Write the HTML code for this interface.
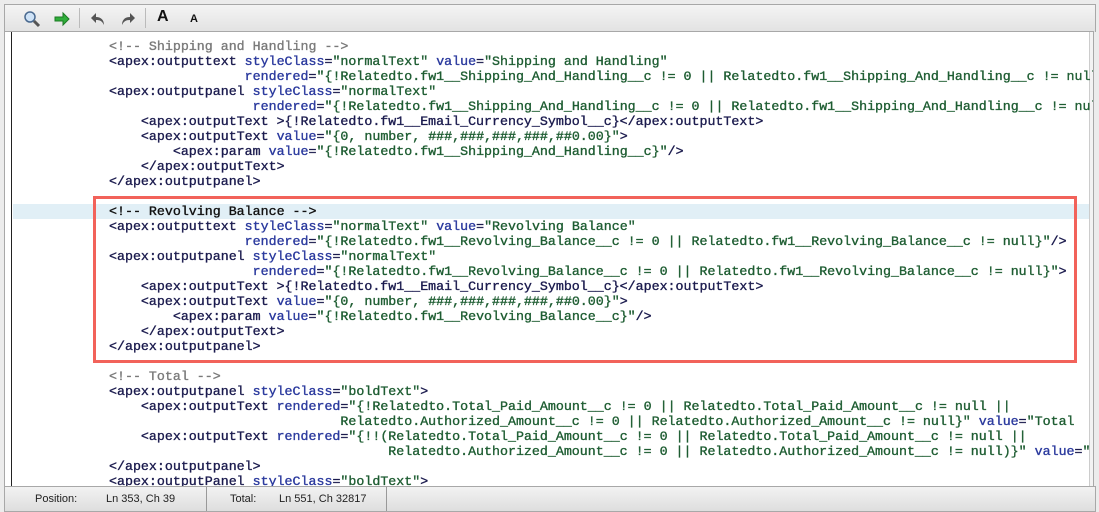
<!DOCTYPE html>
<html><head><meta charset="utf-8"><style>
body{margin:0;width:1099px;height:512px;background:#ececec;position:relative;overflow:hidden;font-family:"Liberation Sans",sans-serif}
#tb{position:absolute;left:4px;top:4px;width:1090px;height:27px;background:linear-gradient(#f4f4f4,#e2e2e2);border:1px solid #a8a8a8;border-bottom:none}
#ed{position:absolute;left:4px;top:31px;width:1088px;height:455px;background:#fff;border:1px solid #a8a8a8;overflow:hidden}
#gut{position:absolute;left:6px;top:0;width:1px;height:455px;background:#222}
#sb{position:absolute;left:1084px;top:0;width:6px;height:455px;background:#f3f3f3;border-left:1px solid #ccc}
#hl{position:absolute;left:8px;top:172px;width:1076px;height:15px;background:#e1eff6}
pre{margin:0;position:absolute;left:104px;top:7px;font:13.3px/15px "Liberation Mono",monospace;-webkit-text-stroke:0.35px;color:#1b1b4e;white-space:pre}
.a{color:#2b3a9e}.v{color:#1e5d32}.c{color:#7a7a7a}.k{color:#111}
#box{position:absolute;left:93px;top:196px;width:978px;height:161px;border:3px solid #f2625a}
#st{position:absolute;left:4px;top:486px;width:1090px;height:24px;background:linear-gradient(#f2f2f2,#dedede);border:1px solid #a8a8a8;font-size:11px;color:#222}
#st span{position:absolute;top:6px}
.sep{position:absolute;top:0;width:1px;height:24px;background:#999}
.ic{position:absolute;top:8px}
</style></head><body>
<div id="tb">
<svg class="ic" style="left:18px;top:5px" width="18" height="18"><circle cx="7" cy="7" r="5" fill="#cfe3f7" stroke="#4a6a90" stroke-width="1.5"/><line x1="11" y1="11" x2="16" y2="16" stroke="#555" stroke-width="3"/></svg>
<svg class="ic" style="left:48px;top:5px" width="18" height="18"><path d="M2 7h8V3l6 6-6 6v-4H2z" fill="#2fae3a" stroke="#1c7a24"/></svg>
<div class="sep" style="left:74px;top:3px;height:20px;background:#bbb"></div>
<svg class="ic" style="left:84px;top:5px" width="18" height="18"><path d="M7 3L2 8l5 5V10c4 0 6 1 8 5 0-5-3-8-8-8z" fill="#555"/></svg>
<svg class="ic" style="left:114px;top:5px" width="18" height="18"><path d="M11 3l5 5-5 5V10c-4 0-6 1-8 5 0-5 3-8 8-8z" fill="#555"/></svg>
<div class="sep" style="left:140px;top:3px;height:20px;background:#bbb"></div>
<span style="position:absolute;left:152px;top:3px;font:bold 16px 'Liberation Sans';color:#111">A</span>
<span style="position:absolute;left:185px;top:8px;font:bold 11px 'Liberation Sans';color:#111">A</span>
</div>
<div id="ed"><div id="gut"></div><div id="hl"></div><div id="sb"></div>
<pre><span class="c">&lt;!-- Shipping and Handling --&gt;</span>
&lt;apex:outputtext <span class="a">styleClass</span>=<span class="v">"normalText"</span> <span class="a">value</span>=<span class="v">"Shipping and Handling"</span>
                 <span class="a">rendered</span>=<span class="v">"{!Relatedto.fw1__Shipping_And_Handling__c != 0 || Relatedto.fw1__Shipping_And_Handling__c != null}"/&gt;</span>
&lt;apex:outputpanel <span class="a">styleClass</span>=<span class="v">"normalText"</span>
                  <span class="a">rendered</span>=<span class="v">"{!Relatedto.fw1__Shipping_And_Handling__c != 0 || Relatedto.fw1__Shipping_And_Handling__c != null}"</span>&gt;
    &lt;apex:outputText &gt;{!Relatedto.fw1__Email_Currency_Symbol__c}&lt;/apex:outputText&gt;
    &lt;apex:outputText <span class="a">value</span>=<span class="v">"{0, number, ###,###,###,###,##0.00}"</span>&gt;
        &lt;apex:param <span class="a">value</span>=<span class="v">"{!Relatedto.fw1__Shipping_And_Handling__c}"</span>/&gt;
    &lt;/apex:outputText&gt;
&lt;/apex:outputpanel&gt;

<span class="k">&lt;!-- Revolving Balance --&gt;</span>
&lt;apex:outputtext <span class="a">styleClass</span>=<span class="v">"normalText"</span> <span class="a">value</span>=<span class="v">"Revolving Balance"</span>
                 <span class="a">rendered</span>=<span class="v">"{!Relatedto.fw1__Revolving_Balance__c != 0 || Relatedto.fw1__Revolving_Balance__c != null}"</span>/&gt;
&lt;apex:outputpanel <span class="a">styleClass</span>=<span class="v">"normalText"</span>
                  <span class="a">rendered</span>=<span class="v">"{!Relatedto.fw1__Revolving_Balance__c != 0 || Relatedto.fw1__Revolving_Balance__c != null}"</span>&gt;
    &lt;apex:outputText &gt;{!Relatedto.fw1__Email_Currency_Symbol__c}&lt;/apex:outputText&gt;
    &lt;apex:outputText <span class="a">value</span>=<span class="v">"{0, number, ###,###,###,###,##0.00}"</span>&gt;
        &lt;apex:param <span class="a">value</span>=<span class="v">"{!Relatedto.fw1__Revolving_Balance__c}"</span>/&gt;
    &lt;/apex:outputText&gt;
&lt;/apex:outputpanel&gt;

<span class="c">&lt;!-- Total --&gt;</span>
&lt;apex:outputpanel <span class="a">styleClass</span>=<span class="v">"boldText"</span>&gt;
    &lt;apex:outputText <span class="a">rendered</span>=<span class="v">"{!Relatedto.Total_Paid_Amount__c != 0 || Relatedto.Total_Paid_Amount__c != null ||
                             Relatedto.Authorized_Amount__c != 0 || Relatedto.Authorized_Amount__c != null}"</span> <span class="a">value</span>=<span class="v">"Total</span>
    &lt;apex:outputText <span class="a">rendered</span>=<span class="v">"{!!(Relatedto.Total_Paid_Amount__c != 0 || Relatedto.Total_Paid_Amount__c != null ||
                                   Relatedto.Authorized_Amount__c != 0 || Relatedto.Authorized_Amount__c != null)}"</span> <span class="a">value</span>=<span class="v">"</span>
&lt;/apex:outputpanel&gt;
&lt;apex:outputPanel <span class="a">styleClass</span>=<span class="v">"boldText"</span>&gt;</pre>
</div>
<div id="box"></div>
<div id="st">
<span style="left:30px">Position:</span><span style="left:101px">Ln 353, Ch 39</span>
<div class="sep" style="left:201px"></div>
<span style="left:225px">Total:</span><span style="left:274px">Ln 551, Ch 32817</span>
<div class="sep" style="left:381px"></div>
</div>
</body></html>
